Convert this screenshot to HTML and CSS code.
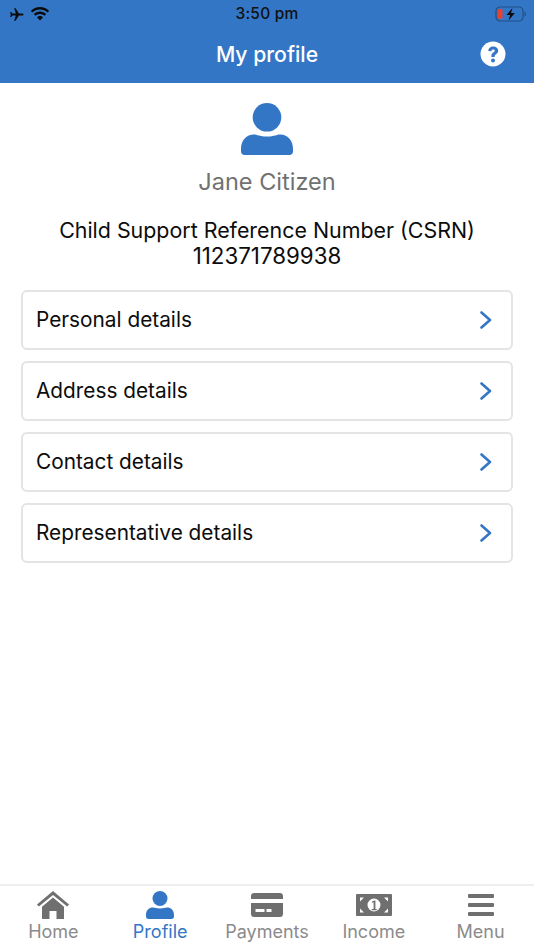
FILE: index.html
```html
<!DOCTYPE html>
<html lang="en">
<head>
<meta charset="utf-8">
<title>My profile</title>
<link rel="stylesheet" href="styles.css">
</head>
<body>
<div class="app">
  <header class="header">
    <div class="status">
      <div class="status-left">
        <svg class="ic-plane" viewBox="0 0 16 14"><path d="M15.6 7c0-.7-.8-1.100-1.600-1.100h-3.400L7 .3H5.500l1.800 5.600H3.600L2.300 4.200H1.100l.8 2.800-.8 2.800h1.200l1.300-1.700h3.700l-1.800 5.600H7l3.600-5.600H14c.8 0 1.600-.4 1.600-1.100z"/></svg>
        <svg class="ic-wifi" viewBox="0 0 20 14"><path d="M10 2.600c3 0 5.600 1.100 7.600 3l1.600-1.700C16.800 1.500 13.500 0 10 0S3.200 1.500.8 3.900l1.600 1.700c2-1.900 4.600-3 7.600-3z"/><path d="M10 7c1.800 0 3.400.7 4.600 1.800l1.600-1.700C14.600 5.500 12.400 4.500 10 4.500S5.400 5.500 3.800 7.100l1.600 1.700C6.600 7.700 8.200 7 10 7z"/><path d="M10 9c-1.200 0-2.200.4-3 1.200l3 3.300 3-3.300C12.200 9.400 11.200 9 10 9z"/></svg>
      </div>
      <span class="status-time">3:50 pm</span>
      <svg class="ic-battery" viewBox="0 0 32 16"><rect x="1" y="1" width="27" height="14" rx="4" fill="none" stroke="#1f4f86" stroke-width="1.200"/><rect x="3" y="3" width="4.500" height="10" rx="1.400" fill="#e8412f"/><path d="M29.500 5.500v5c.9-.3 1.500-1.400 1.500-2.500s-.6-2.200-1.500-2.500z" fill="#1f4f86"/><path d="M17.500 2 11.500 9h3.600l-1.500 5.500 6.200-7.500h-3.800z" fill="#0b0b0b"/></svg>
    </div>
    <div class="nav">
      <h1 class="nav-title">My profile</h1>
      <svg class="ic-help" viewBox="0 0 26 26"><circle cx="13" cy="13" r="12.500" fill="#fff"/><path d="M8.200 10c.2-2.700 2.200-4.400 5-4.400 2.900 0 5 1.700 5 4.100 0 1.700-1 2.700-2.200 3.500-1 .7-1.400 1.100-1.400 2.100v.6h-3.200v-.9c0-1.800.8-2.800 2-3.500.9-.6 1.400-1.100 1.400-1.700 0-.8-.7-1.300-1.600-1.300-1.100 0-1.700.6-1.800 1.700z" fill="#3476c6"/><circle cx="13" cy="19.400" r="2" fill="#3476c6"/></svg>
    </div>
  </header>

  <main class="main">
    <section class="identity">
      <svg class="avatar" viewBox="0 0 52 52"><circle cx="26" cy="14.300" r="14.300"/><path d="M0 46c0-9 5.500-14.500 13-14.500 3 0 5.500 2 13 2s10-2 13-2c7.500 0 13 5.500 13 14.500v2.500c0 2-1.500 3.500-3.500 3.500h-45C1.500 52 0 50.500 0 48.500z"/></svg>
      <p class="name">Jane Citizen</p>
      <p class="csrn">Child Support Reference Number (CSRN)<br><span class="csrn-number">112371789938</span></p>
    </section>

    <ul class="cards">
      <li class="card"><span>Personal details</span><svg class="chev" viewBox="0 0 12 18"><path d="M1.500 1.500l8.500 7.500-8.500 7.500"/></svg></li>
      <li class="card"><span>Address details</span><svg class="chev" viewBox="0 0 12 18"><path d="M1.500 1.500l8.500 7.500-8.500 7.500"/></svg></li>
      <li class="card"><span>Contact details</span><svg class="chev" viewBox="0 0 12 18"><path d="M1.500 1.500l8.500 7.500-8.500 7.500"/></svg></li>
      <li class="card"><span>Representative details</span><svg class="chev" viewBox="0 0 12 18"><path d="M1.500 1.500l8.500 7.500-8.500 7.500"/></svg></li>
    </ul>
  </main>

  <nav class="tabs">
    <div class="tab">
      <svg class="tab-ic" viewBox="0 0 36 30"><path d="M18 0 2 13.500l1.800 2.100L18 3.900l14.200 11.700 1.800-2.100z"/><path d="M18 6.500 7 15.700V28h7.500v-8h7v8H29V15.700z"/></svg>
      <span>Home</span>
    </div>
    <div class="tab active">
      <svg class="tab-ic" viewBox="0 0 36 30"><circle cx="18" cy="7.500" r="7.500"/><path d="M4 24c0-5 3-7.500 7-7.500 2 0 3.500 1 7 1s5-1 7-1c4 0 7 2.500 7 7.500v1.500c0 1.400-1 2.500-2.500 2.500h-23C5 28 4 26.900 4 25.500z"/></svg>
      <span>Profile</span>
    </div>
    <div class="tab">
      <svg class="tab-ic" viewBox="0 0 36 30"><path d="M5 2h26c1.700 0 3 1.300 3 3v3H2V5c0-1.700 1.300-3 3-3z"/><path fill-rule="evenodd" d="M2 12h32v11c0 1.700-1.300 3-3 3H5c-1.700 0-3-1.300-3-3zm4.500 6v3h9v-3zm11 0v3h5v-3z"/></svg>
      <span>Payments</span>
    </div>
    <div class="tab">
      <svg class="tab-ic" viewBox="0 0 36 30"><path fill-rule="evenodd" d="M1 3h34a1 1 0 0 1 1 1v20a1 1 0 0 1-1 1H1a1 1 0 0 1-1-1V4a1 1 0 0 1 1-1zm17 4.500a6.500 6.500 0 1 0 0 13 6.500 6.500 0 0 0 0-13zM4 6.500v4l4-4zm24 0 4 4v-4zM4 21.500h4l-4-4zm28 0v-4l-4 4z"/><path d="M16 10.500l2.400-1h1v8.500h1.300v1.200h-5V18h1.900v-6.700l-1.600.5z"/></svg>
      <span>Income</span>
    </div>
    <div class="tab">
      <svg class="tab-ic" viewBox="0 0 36 30"><rect x="5" y="3" width="26" height="4" rx="1"/><rect x="5" y="12" width="26" height="4" rx="1"/><rect x="5" y="21" width="26" height="4" rx="1"/></svg>
      <span>Menu</span>
    </div>
  </nav>
</div>
</body>
</html>
```

FILE: styles.css
```css
* { box-sizing: border-box; }
html, body { margin: 0; padding: 0; }
body { font-family: Inter, "Liberation Sans", sans-serif; background: #fff; }

.app { width: 534px; height: 950px; display: flex; flex-direction: column; overflow: hidden; }

.header { height: 83px; background: #3476c6; flex: none; }
.status { height: 27px; display: flex; align-items: center; justify-content: space-between; padding: 0 7px 0 9px; position: relative; }
.status-left { display: flex; align-items: center; gap: 6px; }
.ic-plane { width: 15px; height: 13px; fill: #0b0b0b; margin-top: 2px; }
.ic-wifi { width: 20px; height: 14px; fill: #0b0b0b; }
.status-time { font-size: 15.500px; font-weight: 500; color: #111; letter-spacing: .2px; position: absolute; left: 0; right: 0; text-align: center; }
.ic-battery { width: 32px; height: 16px; }

.nav { height: 56px; display: flex; align-items: center; justify-content: center; position: relative; }
.nav-title { margin: 0 0 1px; font-size: 21.200px; font-weight: 500; color: #fff; line-height: 1; }
.ic-help { position: absolute; right: 28px; top: 14px; width: 26px; height: 26px; }

.main { flex: 1; padding: 20px 21px 0; }
.identity { display: flex; flex-direction: column; align-items: center; }
.avatar { width: 52px; height: 52px; fill: #3476c6; display: block; }
.name { margin: 12px 0 0; font-size: 23.500px; line-height: 30px; color: #717171; }
.csrn { margin: 20px 0 0; font-size: 21.400px; line-height: 26px; color: #0c0c0c; text-align: center; }
.csrn-number { font-size: 22.300px; }

.cards { list-style: none; margin: 21px 0 0; padding: 0; display: flex; flex-direction: column; gap: 11px; }
.card { height: 60px; border: 2px solid #e4e4e4; border-radius: 6px; display: flex; align-items: center; justify-content: space-between; padding: 0 19px 0 13px; font-size: 20.800px; color: #0c0c0c; }
.card span { margin-bottom: 2px; }
.chev { width: 12px; height: 18px; fill: none; stroke: #3476c6; stroke-width: 2.600; stroke-linecap: round; stroke-linejoin: round; }

.tabs { height: 66px; flex: none; border-top: 2px solid #efefef; background: #fff; display: grid; grid-template-columns: repeat(5, 1fr); }
.tab { display: flex; flex-direction: column; align-items: center; padding-top: 5px; font-size: 18px; color: #8b8b8b; }
.tab span { line-height: 24px; margin-top: -1px; }
.tab-ic { width: 36px; height: 30px; fill: #6f6f6f; display: block; }
.tab.active { color: #3476c6; }
.tab.active .tab-ic { fill: #3476c6; }
```
